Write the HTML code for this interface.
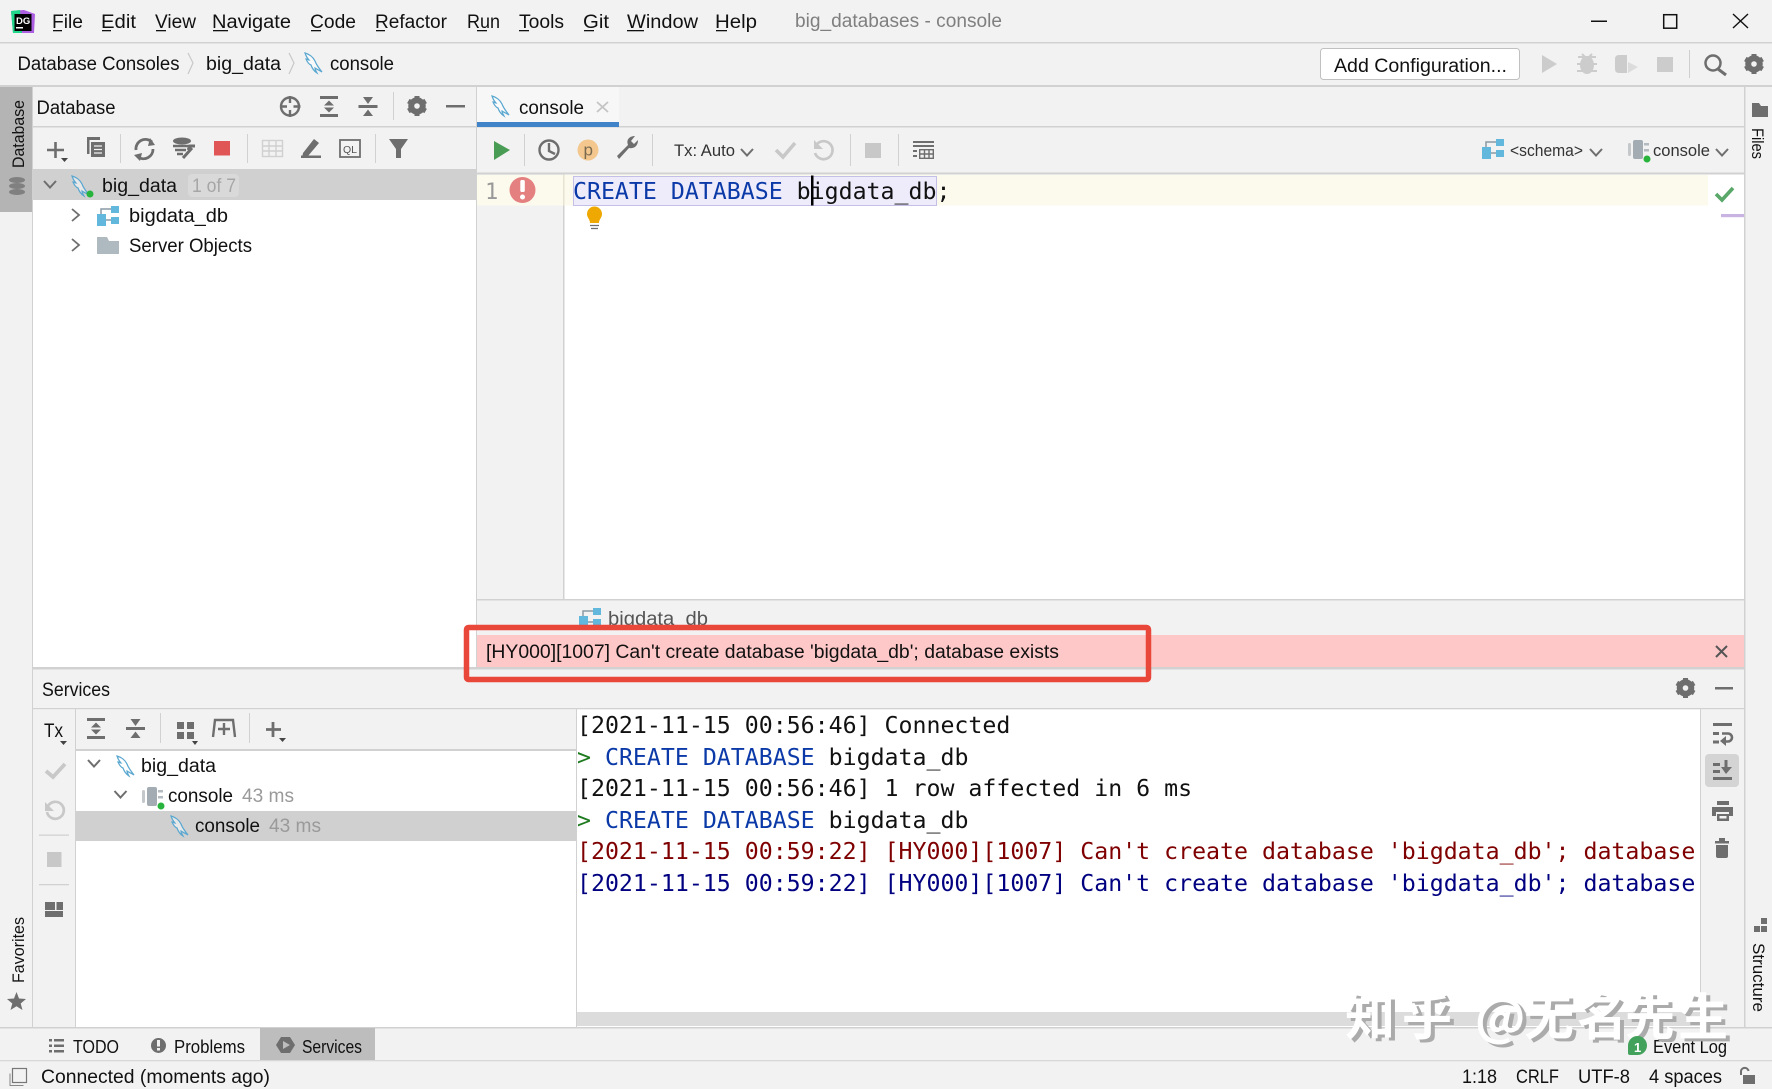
<!DOCTYPE html>
<html><head><meta charset="utf-8"><title>big_databases - console</title>
<style>
html,body{margin:0;padding:0;background:#f2f2f2;width:1772px;height:1089px;overflow:hidden}
svg{display:block}
text{font-family:"Liberation Sans","Noto Sans CJK SC",sans-serif;font-size:19px;fill:#111}
.m{font-family:"DejaVu Sans Mono","Liberation Mono",monospace;font-size:23.23px;white-space:pre}
.g{fill:#9a9a9a}
.kw{fill:#0b3aa8}.red{fill:#7f0000}.navy{fill:#000080}.gp{fill:#1e7a1e}
.wm{font-family:"Noto Sans CJK SC",sans-serif;font-size:50px;font-weight:bold}
</style></head><body>
<svg xmlns="http://www.w3.org/2000/svg" width="1772" height="1089" viewBox="0 0 1772 1089">
<defs>
<g id="dol"><path d="M2 0C6 1 10 4 12 8C13 11 15 14 19 19C16 17 14 16.500 12 15C12 17 13 18 14 20C11 18 9 15 8 12C5 11 4 8 3 6C4 6 5 7 6 7C4 5 3 3 2 0Z" fill="#ffffff" fill-opacity=".5" stroke="#5aa7d0" stroke-width="1.200"/></g>
<g id="sch"><path d="M4 9V3H14" fill="none" stroke="#8a9aa5" stroke-width="1.500"/><rect x="14" y="0" width="8" height="7" fill="#62b7dd"/><rect x="0" y="8" width="9" height="12" fill="#62b7dd"/><rect x="14" y="11" width="8" height="7" fill="#62b7dd"/><path d="M9 14H14" stroke="#8a9aa5" stroke-width="1.500"/></g>
<g id="con"><rect x="0" y="3" width="3" height="13" rx="1.500" fill="#c4c8cb"/><rect x="5" y="0" width="10" height="19" rx="2" fill="#a3acb3"/><rect x="16" y="3" width="5" height="2.500" fill="#b4bbc0"/><rect x="16" y="9" width="5" height="2.500" fill="#b4bbc0"/><circle cx="19" cy="19" r="3.500" fill="#28b43c"/></g>
<g id="gear"><circle r="6.500" fill="none" stroke="#6e6e6e" stroke-width="4.500"/><g fill="#6e6e6e"><rect x="-2.500" y="-10" width="5" height="20"/><rect x="-2.500" y="-10" width="5" height="20" transform="rotate(60)"/><rect x="-2.500" y="-10" width="5" height="20" transform="rotate(120)"/></g><circle r="2.800" fill="#f2f2f2"/></g>
<g id="expand"><rect x="0" y="0" width="18" height="3" fill="#6e6e6e"/><rect x="0" y="18" width="18" height="3" fill="#6e6e6e"/><path d="M9 4.500L14 9.500H4ZM9 16.500L4 11.500H14Z" fill="#6e6e6e"/></g>
<g id="coll"><rect x="0" y="9" width="19" height="3" fill="#6e6e6e"/><path d="M9.500 8L4.500 1H14.500ZM9.500 13.500L14.500 20H4.500Z" fill="#6e6e6e"/></g>
<path id="cd" d="M0 0L6 6.500L12 0" fill="none" stroke="#6e6e6e" stroke-width="2"/>
<path id="cr" d="M0 0L7 6L0 12" fill="none" stroke="#6e6e6e" stroke-width="1.800"/>
</defs>

<rect width="1772" height="1089" fill="#f2f2f2"/>

<!-- Title bar -->
<rect x="0" y="42" width="1772" height="1.500" fill="#d1d1d1"/>
<g>
<path d="M11 11L24 10L35 14L34 33L13 33Z" fill="#ac5fe0"/><path d="M11 11L20 10L22 33L13 33Z" fill="#21d789"/>
<rect x="14.500" y="14" width="17" height="17" fill="#000"/>
<text x="16" y="24" style="font-size:9.500px;font-weight:bold;fill:#fff">DG</text><rect x="16" y="27" width="7" height="1.500" fill="#fff"/>
</g>
<text x="52" y="28" textLength="31" lengthAdjust="spacingAndGlyphs">File</text>
<text x="101" y="28" textLength="35" lengthAdjust="spacingAndGlyphs">Edit</text>
<text x="155" y="28" textLength="41" lengthAdjust="spacingAndGlyphs">View</text>
<text x="212" y="28" textLength="79" lengthAdjust="spacingAndGlyphs">Navigate</text>
<text x="310" y="28" textLength="46" lengthAdjust="spacingAndGlyphs">Code</text>
<text x="375" y="28" textLength="72" lengthAdjust="spacingAndGlyphs">Refactor</text>
<text x="467" y="28" textLength="33" lengthAdjust="spacingAndGlyphs">Run</text>
<text x="519" y="28" textLength="45" lengthAdjust="spacingAndGlyphs">Tools</text>
<text x="583" y="28" textLength="26" lengthAdjust="spacingAndGlyphs">Git</text>
<text x="627" y="28" textLength="71" lengthAdjust="spacingAndGlyphs">Window</text>
<text x="715" y="28" textLength="42" lengthAdjust="spacingAndGlyphs">Help</text>
<g fill="#111"><rect x="53" y="30" width="9" height="1.300"/><rect x="102" y="30" width="9" height="1.300"/><rect x="156" y="30" width="10" height="1.300"/><rect x="213" y="30" width="15" height="1.300"/><rect x="311" y="30" width="10" height="1.300"/><rect x="376" y="30" width="9" height="1.300"/><rect x="477" y="30" width="10" height="1.300"/><rect x="519" y="30" width="10" height="1.300"/><rect x="584" y="30" width="10" height="1.300"/><rect x="627" y="30" width="17" height="1.300"/><rect x="716" y="30" width="11" height="1.300"/></g>
<text x="795" y="27" textLength="207" lengthAdjust="spacingAndGlyphs" style="fill:#7f7f7f">big_databases - console</text>
<rect x="1591" y="20.500" width="16" height="1.500" fill="#111"/>
<rect x="1663.700" y="14.700" width="13" height="13.500" fill="none" stroke="#111" stroke-width="1.500"/>
<path d="M1733 14L1748 28M1748 14L1733 28" stroke="#111" stroke-width="1.400"/>

<!-- Navigation bar -->
<rect x="0" y="85" width="1772" height="2" fill="#d1d1d1"/>
<text x="17.500" y="70" textLength="162" lengthAdjust="spacingAndGlyphs">Database Consoles</text>
<path d="M188 53L193 63L188 74" fill="none" stroke="#c8c8c8" stroke-width="1.200"/>
<text x="206" y="70" textLength="75" lengthAdjust="spacingAndGlyphs">big_data</text>
<path d="M289 53L294 63L289 74" fill="none" stroke="#c8c8c8" stroke-width="1.200"/>
<use href="#dol" x="303" y="53"/>
<text x="330" y="70" textLength="64" lengthAdjust="spacingAndGlyphs">console</text>
<rect x="1320.500" y="48.500" width="199" height="31" rx="3" fill="#fff" stroke="#c0c0c0"/>
<text x="1334" y="72" textLength="173" lengthAdjust="spacingAndGlyphs">Add Configuration...</text>
<path d="M1542 55L1557 64L1542 73Z" fill="#cccccc"/>
<g fill="#cccccc"><ellipse cx="1587" cy="65" rx="7" ry="9"/><path d="M1578 57L1596 57M1577 64H1597M1577 71H1597M1582 54L1585 57M1592 54L1589 57" stroke="#cccccc" stroke-width="2"/></g>
<path d="M1615 59Q1615 55 1619 55H1627V73H1619Q1615 73 1615 69Z" fill="#cccccc"/><path d="M1628 62L1638 67L1628 73Z" fill="#dcdcdc"/>
<rect x="1657" y="57" width="16" height="15" fill="#cccccc"/>
<rect x="1689" y="50" width="1" height="28" fill="#cfcfcf"/>
<circle cx="1713" cy="63" r="7.500" fill="none" stroke="#6e6e6e" stroke-width="2.500"/><path d="M1718 69L1726 75" stroke="#6e6e6e" stroke-width="3"/>
<use href="#gear" x="1754" y="64"/>

<!-- Left strip -->
<rect x="0" y="87" width="32" height="125" fill="#b4b4b4"/>
<rect x="32" y="87" width="1" height="940" fill="#d1d1d1"/>
<text transform="translate(24,168) rotate(-90)" textLength="68" lengthAdjust="spacingAndGlyphs" style="font-size:17px">Database</text>
<g fill="#808080"><ellipse cx="17" cy="180" rx="8" ry="3"/><ellipse cx="17" cy="186" rx="8" ry="3"/><ellipse cx="17" cy="192" rx="8" ry="3"/></g>
<text transform="translate(24,983) rotate(-90)" textLength="66" lengthAdjust="spacingAndGlyphs" style="font-size:17px">Favorites</text>
<path d="M16.500 992L19 998.500L26 999L20.700 1003.500L22.500 1010L16.500 1006.300L10.500 1010L12.300 1003.500L7 999L14 998.500Z" fill="#6e6e6e"/>

<!-- Database panel -->
<rect x="33" y="169" width="443" height="499" fill="#fff"/>
<rect x="33" y="126" width="443" height="1.500" fill="#d1d1d1"/>
<rect x="476" y="87" width="1" height="581" fill="#d1d1d1"/>
<text x="36.500" y="114" textLength="79" lengthAdjust="spacingAndGlyphs">Database</text>
<circle cx="290" cy="106.500" r="9" fill="none" stroke="#6e6e6e" stroke-width="2.400"/><path d="M290 96V103M290 110V117M280 106.500H287M293.500 106.500H300.500" stroke="#6e6e6e" stroke-width="2.400"/>
<use href="#expand" x="320" y="96"/>
<use href="#coll" x="358.500" y="96"/>
<rect x="393" y="92" width="1" height="28" fill="#d1d1d1"/>
<use href="#gear" x="417" y="106"/>
<rect x="446" y="105" width="19" height="2.500" fill="#6e6e6e"/>
<!-- db toolbar -->
<path d="M55.500 142V158M47 150H64" stroke="#6e6e6e" stroke-width="2.600"/><path d="M61 158H68L64.500 162Z" fill="#444"/>
<rect x="87" y="137" width="13" height="3" fill="#6e6e6e"/><rect x="87" y="137" width="2.500" height="17" fill="#6e6e6e"/>
<rect x="91" y="142" width="14" height="15" fill="#6e6e6e"/><path d="M94 146H102M94 149.500H102M94 153H102" stroke="#f2f2f2" stroke-width="1.300"/>
<rect x="120" y="134" width="1" height="29" fill="#d1d1d1"/>
<path d="M136 150A9.500 9.500 0 0 1 152 142M153 149A9.500 9.500 0 0 1 138 157" fill="none" stroke="#6e6e6e" stroke-width="2.800"/><path d="M150 138L155 145L148 146ZM140 161L134 155L142 153Z" fill="#6e6e6e"/>
<ellipse cx="182" cy="141" rx="9" ry="3.500" fill="#6e6e6e"/><path d="M173 146H190M175 150H186M177 154H183" stroke="#6e6e6e" stroke-width="2.500"/><path d="M183 158L192 148M195 146L190 146L188 150" fill="none" stroke="#6e6e6e" stroke-width="3"/>
<rect x="214" y="141" width="16" height="14.500" fill="#e05555"/>
<rect x="247" y="134" width="1" height="29" fill="#d1d1d1"/>
<g fill="none" stroke="#d0d0d0" stroke-width="1.400"><rect x="262.500" y="140.500" width="20" height="16"/><path d="M262 146H283M262 151H283M269 140V157M276 140V157"/></g>
<path d="M303 153L314 139L319 143L308 156L302 158Z" fill="#6e6e6e"/><rect x="301" y="155.500" width="20" height="2.500" fill="#6e6e6e"/>
<rect x="340" y="140" width="20" height="17" fill="none" stroke="#6e6e6e" stroke-width="1.800"/><text x="343" y="153" textLength="14" lengthAdjust="spacingAndGlyphs" style="font-size:10px;fill:#555">QL</text>
<rect x="375" y="134" width="1" height="29" fill="#d1d1d1"/>
<path d="M389 139H408L401 149V158H396V149Z" fill="#6e6e6e"/>
<!-- Tree -->
<rect x="33" y="169" width="443" height="31" fill="#d0d0d0"/>
<use href="#cd" x="44" y="181"/>
<use href="#dol" x="70" y="176"/>
<circle cx="90" cy="194" r="3.500" fill="#28b43c"/>
<text x="102" y="192" textLength="75" lengthAdjust="spacingAndGlyphs">big_data</text>
<rect x="188" y="174" width="51" height="23" rx="4" fill="#d9d9d9"/>
<text x="192" y="192" textLength="44" lengthAdjust="spacingAndGlyphs" style="fill:#a6a6a6">1 of 7</text>
<use href="#cr" x="72" y="209"/>
<use href="#sch" x="97" y="206"/>
<text x="129" y="222" textLength="99" lengthAdjust="spacingAndGlyphs">bigdata_db</text>
<use href="#cr" x="72" y="239"/>
<path d="M97 237H107L109 241H119V254H97Z" fill="#aeb9c0"/>
<text x="129" y="252" textLength="123" lengthAdjust="spacingAndGlyphs">Server Objects</text>

<!-- Tabs -->
<rect x="477" y="126" width="1267" height="1.500" fill="#d1d1d1"/>
<rect x="477" y="87" width="142" height="36" fill="#f7f7f7"/>
<rect x="477" y="122" width="142" height="5" fill="#4083c9"/>
<use href="#dol" x="490" y="96"/>
<text x="519" y="114" textLength="65" lengthAdjust="spacingAndGlyphs">console</text>
<path d="M597 102L608 112M608 102L597 112" stroke="#c4c4c4" stroke-width="1.800"/>

<!-- Editor toolbar -->
<path d="M494 141L510 150L494 160Z" fill="#499c54"/>
<rect x="524" y="134" width="1" height="32" fill="#d1d1d1"/>
<circle cx="549" cy="150" r="9.500" fill="none" stroke="#6e6e6e" stroke-width="2.400"/><path d="M549 143V151L555 154" fill="none" stroke="#6e6e6e" stroke-width="2.400"/>
<circle cx="588" cy="150" r="10.500" fill="#f3c78e"/><text x="583.500" y="155.500" style="font-size:17px;fill:#7a6a50">p</text>
<path d="M617 156L628 145C626 140 629 136 635 136L631 141L634 144L638 140C638 146 634 149 629 148L619 159Z" fill="#6e6e6e"/>
<rect x="652" y="134" width="1" height="32" fill="#d1d1d1"/>
<text x="674" y="156" textLength="61" lengthAdjust="spacingAndGlyphs" style="font-size:17px;fill:#333">Tx: Auto</text>
<use href="#cd" x="741" y="149"/>
<path d="M776 150L783 157L795 143" fill="none" stroke="#c8c8c8" stroke-width="3.600"/>
<path d="M817 144A9 9 0 1 1 815 153" fill="none" stroke="#c8c8c8" stroke-width="2.700"/><path d="M814 140V149H823Z" fill="#c8c8c8"/>
<rect x="850" y="134" width="1" height="32" fill="#d1d1d1"/>
<rect x="865" y="143" width="16" height="15" fill="#c8c8c8"/>
<rect x="898" y="134" width="1" height="32" fill="#d1d1d1"/>
<g fill="#6e6e6e"><rect x="913" y="141" width="21" height="2"/><rect x="913" y="145" width="21" height="2"/><rect x="913" y="150" width="4" height="2"/><rect x="913" y="155" width="4" height="2"/></g>
<g fill="none" stroke="#6e6e6e" stroke-width="1.400"><rect x="919.700" y="149.700" width="13.600" height="8.600"/><path d="M920 154H934M924.500 150V158M929 150V158"/></g>
<use href="#sch" x="1482" y="139"/>
<text x="1510" y="156" textLength="73" lengthAdjust="spacingAndGlyphs" style="font-size:17px;fill:#333">&lt;schema&gt;</text>
<use href="#cd" x="1590" y="149"/>
<use href="#con" x="1628" y="140"/>
<text x="1653" y="156" textLength="57" lengthAdjust="spacingAndGlyphs" style="font-size:17px;fill:#333">console</text>
<use href="#cd" x="1716" y="149"/>
<rect x="477" y="172.500" width="1267" height="2" fill="#d1d1d1"/>

<!-- Editor -->
<rect x="477" y="174.500" width="86" height="425" fill="#f2f2f2"/>
<rect x="563" y="174.500" width="1181" height="425" fill="#fff"/>
<rect x="563" y="174.500" width="1.500" height="425" fill="#d1d1d1"/>
<rect x="477" y="175" width="1231" height="30.500" fill="#fcfaed"/>
<rect x="563" y="174.500" width="1.500" height="31" fill="#e6e3d3"/>
<text x="485" y="199" class="m" style="fill:#999;font-size:22px">1</text>
<circle cx="522.500" cy="190" r="13" fill="#e58080"/><rect x="520.300" y="180" width="4.500" height="12" rx="1.500" fill="#fff"/><circle cx="522.500" cy="197" r="2.500" fill="#fff"/>
<rect x="573.500" y="176.500" width="363" height="29" fill="#eeecfb" stroke="#c3bfe6"/>
<text x="573" y="199" class="m"><tspan class="kw">CREATE DATABASE</tspan> bigdata_db;</text>
<rect x="811" y="175.500" width="2.500" height="30" fill="#000"/>
<path d="M590 223C590 219 587 218 587 214A7.500 7.500 0 0 1 602 214C602 218 599 219 599 223Z" fill="#eea800"/><path d="M590 225.500H599M591 228.500H598" stroke="#6e6e6e" stroke-width="1.300"/>
<rect x="1708" y="175" width="36" height="30.500" fill="#fff"/>
<path d="M1716 194L1722 200L1733 188" fill="none" stroke="#59a869" stroke-width="3.600"/>
<rect x="1721" y="214" width="23" height="3.200" fill="#c9b3e3"/>

<!-- Editor breadcrumb and error -->
<rect x="477" y="599" width="1267" height="1.500" fill="#d1d1d1"/>
<use href="#sch" x="579" y="608"/>
<text x="608" y="625" textLength="100" lengthAdjust="spacingAndGlyphs" style="fill:#555">bigdata_db</text>
<rect x="477" y="635" width="1267" height="33" fill="#ffc8c8"/>
<rect x="33" y="667" width="1711" height="2.500" fill="#d1d1d1"/>
<text x="486" y="658" textLength="573" lengthAdjust="spacingAndGlyphs" style="fill:#111">[HY000][1007] Can't create database 'bigdata_db'; database exists</text>
<path d="M1716 646L1727 657M1727 646L1716 657" stroke="#555" stroke-width="2"/>
<rect x="466.500" y="627.500" width="682" height="52" rx="2" fill="none" stroke="#e8473a" stroke-width="5.500"/>

<!-- Services header -->
<text x="42" y="696" textLength="68" lengthAdjust="spacingAndGlyphs">Services</text>
<use href="#gear" x="1685.500" y="688"/>
<rect x="1715" y="687" width="18" height="2.500" fill="#6e6e6e"/>
<rect x="33" y="708" width="1711" height="1.200" fill="#d1d1d1"/>
<rect x="1744" y="87" width="1.500" height="940" fill="#d1d1d1"/>

<!-- Services panel -->
<rect x="75" y="709" width="1" height="318" fill="#d1d1d1"/>
<text x="44" y="737" textLength="19" lengthAdjust="spacingAndGlyphs">Tx</text>
<path d="M60 741H67L63.500 745Z" fill="#444"/>
<path d="M46 771L53 777L65 764" fill="none" stroke="#c8c8c8" stroke-width="3.800"/>
<path d="M48 806A8.500 8.500 0 1 1 47 812" fill="none" stroke="#c8c8c8" stroke-width="2.700"/><path d="M45 802V811H54Z" fill="#c8c8c8"/>
<rect x="39" y="834.500" width="30" height="1.300" fill="#d1d1d1"/>
<rect x="47" y="852" width="14.500" height="15" fill="#c8c8c8"/>
<rect x="39" y="884" width="30" height="1.300" fill="#d1d1d1"/>
<g fill="#6e6e6e"><rect x="45" y="902" width="10" height="8"/><rect x="56.500" y="902" width="6.500" height="8"/><rect x="45" y="911" width="18" height="6"/></g>
<use href="#expand" x="87" y="718"/>
<use href="#coll" x="126" y="718"/>
<rect x="160" y="713" width="1" height="30" fill="#d1d1d1"/>
<g fill="#6e6e6e"><rect x="177" y="722" width="7" height="7"/><rect x="187" y="722" width="7" height="7"/><rect x="177" y="732" width="7" height="7"/><rect x="187" y="732" width="7" height="7"/><path d="M192 741H198L195 745Z" fill="#444"/></g>
<path d="M213 737L215 720H233L235 737" fill="none" stroke="#6e6e6e" stroke-width="2.400"/><path d="M224 723V735M218 729H230" stroke="#6e6e6e" stroke-width="2.400"/>
<rect x="249" y="713" width="1" height="30" fill="#d1d1d1"/>
<path d="M273 722V737M266 729.500H281" stroke="#6e6e6e" stroke-width="2.800"/><path d="M279 738H286L282.500 742Z" fill="#444"/>
<rect x="76" y="749" width="500" height="2" fill="#d1d1d1"/>
<rect x="76" y="751" width="500" height="276" fill="#fff"/>
<rect x="576" y="709" width="1" height="318" fill="#d1d1d1"/>
<use href="#cd" x="88" y="760"/>
<use href="#dol" x="115" y="756"/>
<text x="141" y="772" textLength="75" lengthAdjust="spacingAndGlyphs">big_data</text>
<use href="#cd" x="114.500" y="791"/>
<use href="#con" x="142" y="787"/>
<text x="168" y="802" textLength="65" lengthAdjust="spacingAndGlyphs">console</text>
<text x="242" y="802" textLength="52" lengthAdjust="spacingAndGlyphs" class="g">43 ms</text>
<rect x="76" y="811" width="500" height="30" fill="#d0d0d0"/>
<use href="#dol" x="169" y="816"/>
<text x="195" y="832" textLength="65" lengthAdjust="spacingAndGlyphs">console</text>
<text x="269" y="832" textLength="52" lengthAdjust="spacingAndGlyphs" class="g">43 ms</text>

<!-- Console -->
<rect x="577" y="709.500" width="1123" height="317.500" fill="#fff"/>
<text x="577" y="733" class="m">[2021-11-15 00:56:46] Connected</text>
<text x="577" y="765" class="m"><tspan class="gp">&gt;</tspan> <tspan class="kw">CREATE DATABASE</tspan> bigdata_db</text>
<text x="577" y="796" class="m">[2021-11-15 00:56:46] 1 row affected in 6 ms</text>
<text x="577" y="828" class="m"><tspan class="gp">&gt;</tspan> <tspan class="kw">CREATE DATABASE</tspan> bigdata_db</text>
<text x="577" y="859" class="m red">[2021-11-15 00:59:22] [HY000][1007] Can't create database 'bigdata_db'; database</text>
<text x="577" y="891" class="m navy">[2021-11-15 00:59:22] [HY000][1007] Can't create database 'bigdata_db'; database</text>
<rect x="577" y="1012" width="1123" height="14" fill="#dcdcdc"/>
<rect x="1700" y="709" width="1" height="318" fill="#d1d1d1"/>
<!-- Console side -->
<path d="M1713 724.500H1732" stroke="#6e6e6e" stroke-width="3"/><path d="M1713 733.500H1719M1713 742H1719" stroke="#6e6e6e" stroke-width="3"/><path d="M1722 733.500H1728A4 4 0 0 1 1728 741.500H1724" fill="none" stroke="#6e6e6e" stroke-width="2.600"/><path d="M1726 736V746L1720 741Z" fill="#6e6e6e"/>
<rect x="1705" y="754" width="34" height="33" rx="4" fill="#d4d4d4"/>
<g fill="#6e6e6e"><rect x="1713" y="763" width="7" height="3"/><rect x="1713" y="770" width="7" height="3"/><rect x="1713" y="777" width="19" height="3"/><rect x="1724.500" y="760" width="3" height="9"/><path d="M1721 767H1732L1726 774Z"/></g>
<g fill="#6e6e6e"><rect x="1717" y="801" width="12" height="4"/><path d="M1712 807H1733V816H1729V812H1716V816H1712Z"/><path d="M1717 814H1729V821H1717ZM1719.500 816V818.500H1726.500V816Z" fill-rule="evenodd"/></g>
<g fill="#6e6e6e"><rect x="1715" y="841" width="14" height="2.500"/><rect x="1719" y="838" width="6" height="3"/><path d="M1716 845H1728V856Q1728 858 1726 858H1718Q1716 858 1716 856Z"/></g>

<!-- Right strip -->
<path d="M1752 103H1759L1761 106H1768V117H1752Z" fill="#6e6e6e"/>
<text transform="translate(1752,128) rotate(90)" textLength="31" lengthAdjust="spacingAndGlyphs" style="font-size:17px">Files</text>
<g fill="#6e6e6e"><rect x="1761" y="918" width="6" height="6"/><rect x="1754" y="926" width="6" height="6"/><rect x="1761" y="926" width="6" height="6"/></g>
<text transform="translate(1753,943) rotate(90)" textLength="69" lengthAdjust="spacingAndGlyphs" style="font-size:17px">Structure</text>

<!-- Bottom tool bar -->
<rect x="0" y="1027" width="1772" height="1.500" fill="#d1d1d1"/>
<rect x="0" y="1060" width="1772" height="1.300" fill="#d8d8d8"/>
<rect x="260" y="1028" width="115" height="32" fill="#bdbdbd"/>
<g fill="#6e6e6e"><rect x="49" y="1039" width="3" height="2.500"/><rect x="54" y="1039" width="10" height="2.500"/><rect x="49" y="1044.500" width="3" height="2.500"/><rect x="54" y="1044.500" width="10" height="2.500"/><rect x="49" y="1050" width="3" height="2.500"/><rect x="54" y="1050" width="10" height="2.500"/></g>
<text x="73" y="1053" textLength="46" lengthAdjust="spacingAndGlyphs" style="font-size:18px">TODO</text>
<circle cx="158.500" cy="1045.500" r="7.500" fill="#6e6e6e"/><rect x="157" y="1040" width="3" height="6.500" fill="#f2f2f2"/><rect x="157" y="1048" width="3" height="2.500" fill="#f2f2f2"/>
<text x="174" y="1053" textLength="71" lengthAdjust="spacingAndGlyphs" style="font-size:18px">Problems</text>
<path d="M281 1037H290L295 1045L290 1053H281L276 1045Z" fill="#6e6e6e"/><path d="M283 1041L290 1045L283 1049Z" fill="#bdbdbd"/>
<text x="302" y="1053" textLength="60" lengthAdjust="spacingAndGlyphs" style="font-size:18px">Services</text>
<text x="1653" y="1053" textLength="74" lengthAdjust="spacingAndGlyphs" style="font-size:18px">Event Log</text>

<!-- Status bar -->
<rect x="9.500" y="1073.500" width="1" height="12" fill="#888"/><rect x="9.500" y="1085" width="14" height="1" fill="#888"/><rect x="12.500" y="1068.500" width="14" height="14" fill="none" stroke="#777" stroke-width="1.200"/>
<text x="41" y="1083" textLength="229" lengthAdjust="spacingAndGlyphs">Connected (moments ago)</text>
<text x="1462" y="1083" textLength="35" lengthAdjust="spacingAndGlyphs">1:18</text>
<text x="1516" y="1083" textLength="43" lengthAdjust="spacingAndGlyphs">CRLF</text>
<text x="1578" y="1083" textLength="52" lengthAdjust="spacingAndGlyphs">UTF-8</text>
<text x="1649" y="1083" textLength="73" lengthAdjust="spacingAndGlyphs">4 spaces</text>
<path d="M1741 1075V1071A3.800 3.800 0 0 1 1748.500 1071" fill="none" stroke="#6e6e6e" stroke-width="2"/><rect x="1743" y="1075" width="12" height="9" fill="#6e6e6e"/>

<!-- Watermark -->
<text class="wm" x="1349 1406" y="1038" style="fill:#ababab">知乎</text><text class="wm" x="1479" y="1038" style="fill:#ababab">@</text><text class="wm" x="1528 1581 1629 1682" y="1038" style="fill:#ababab">无名先生</text>
<text class="wm" x="1345 1402" y="1035" style="fill:#ffffff">知乎</text><text class="wm" x="1475" y="1035" style="fill:#ffffff">@</text><text class="wm" x="1524 1577 1625 1678" y="1035" style="fill:#ffffff">无名先生</text>
<path d="M1628 1046A9.500 9.500 0 1 1 1638 1055H1630Q1628 1055 1628 1053Z" fill="#42a25c"/><text x="1634" y="1052" style="font-size:13px;font-weight:bold;fill:#fff">1</text>
</svg>
</body></html>
